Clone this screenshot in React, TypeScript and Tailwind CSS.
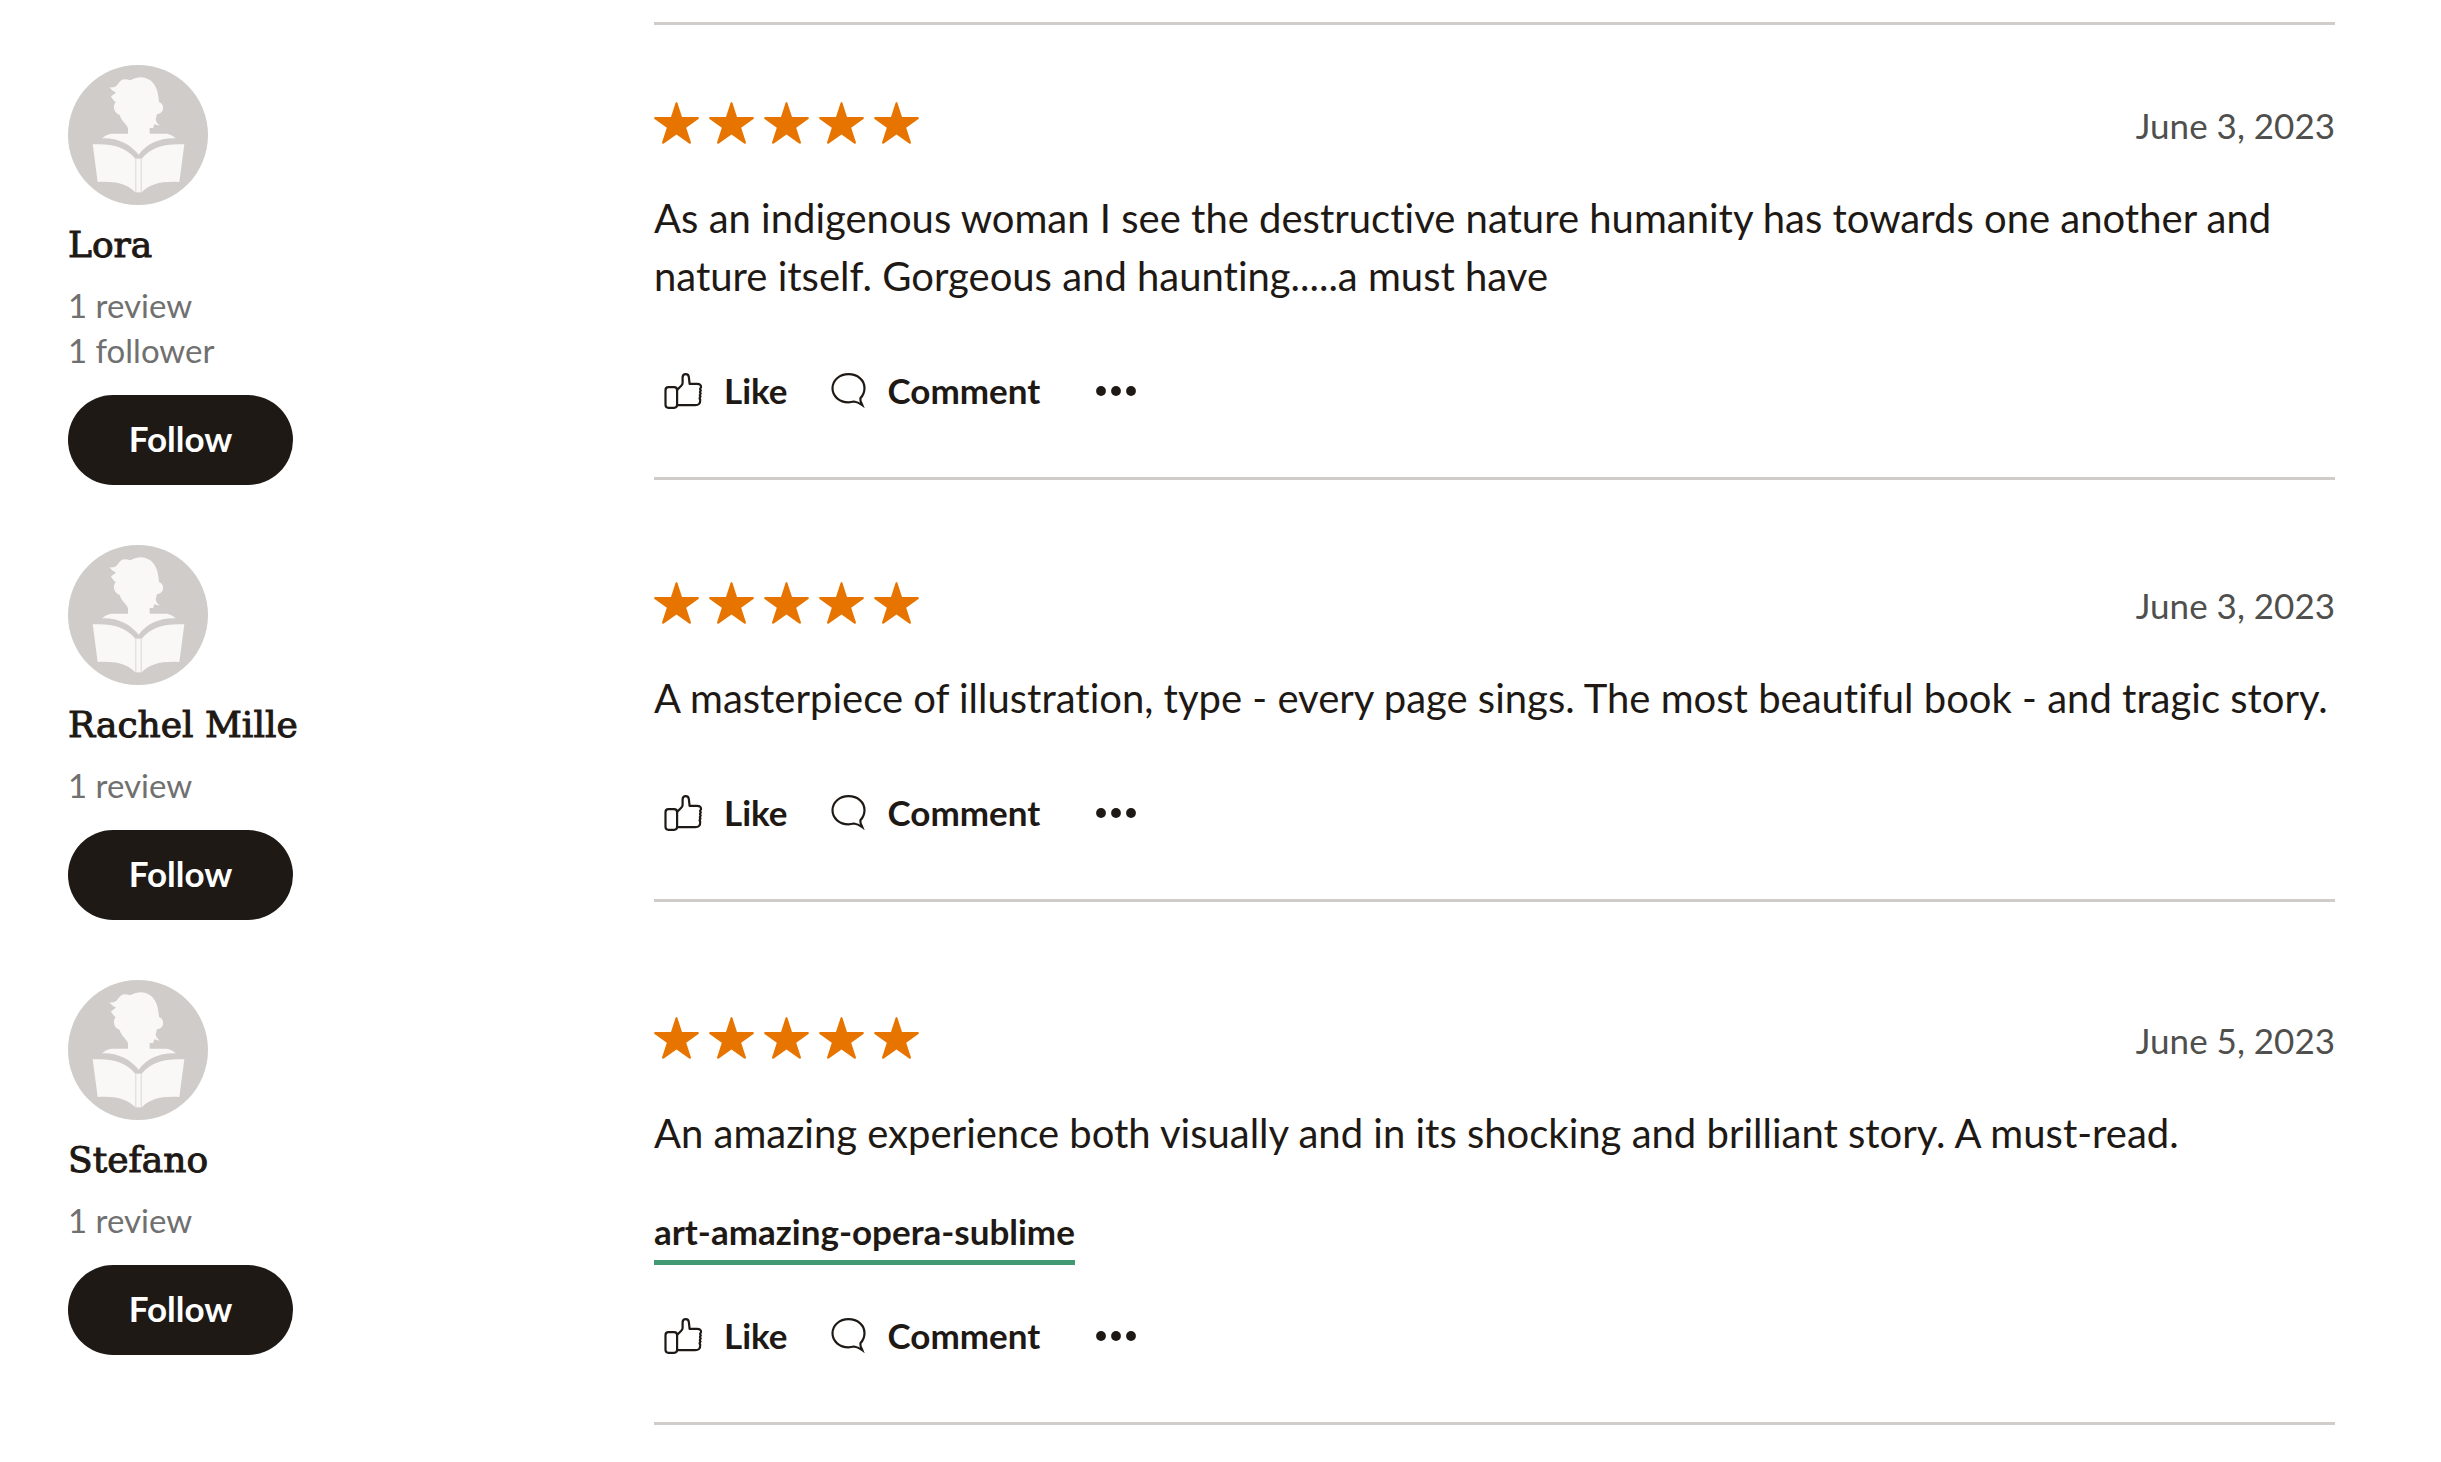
import { FC } from "react";

interface Review {
  id: number;
  name: string;
  stats: string[];
  date: string;
  text: string;
  tags: string[];
}

const reviews: Review[] = [
  {
    id: 1,
    name: "Lora",
    stats: ["1 review", "1 follower"],
    date: "June 3, 2023",
    text: "As an indigenous woman I see the destructive nature humanity has towards one another and nature itself. Gorgeous and haunting.....a must have",
    tags: [],
  },
  {
    id: 2,
    name: "Rachel Mille",
    stats: ["1 review"],
    date: "June 3, 2023",
    text: "A masterpiece of illustration, type - every page sings. The most beautiful book - and tragic story.",
    tags: [],
  },
  {
    id: 3,
    name: "Stefano",
    stats: ["1 review"],
    date: "June 5, 2023",
    text: "An amazing experience both visually and in its shocking and brilliant story. A must-read.",
    tags: ["art-amazing-opera-sublime"],
  },
];

const Avatar: FC = () => (
  <svg viewBox="0 0 420 420" className="size-[140px]" aria-hidden="true">
    <circle cx="210" cy="210" r="210" fill="#cfccc9" />
    <g fill="#f9f8f6">
      <path d="M180 206V191C178 178 161 171 155 150C136 144 134 121 143 112C136 106 130 98 129 94L144 83C136 80 128 72 125 67C136 68 144 66 149 58C158 44 168 39 186 46C208 34 228 34 241 43C264 54 271 81 273 111C290 116 291 145 267 148L263 163C264 171 268 176 275 182L259 178L255 190L245 188V206H296C308 208 318 214 323 220C276 218 236 236 212 269C186 236 146 218 102 220C108 214 118 208 130 206Z" />
      <path d="M74 238C130 235 172 244 202 281V382C178 356 140 348 89 351Z" />
      <path d="M349 238C293 235 251 244 221 281V382C245 356 283 348 334 351Z" />
      <path d="M202 281H221V382H202Z" />
    </g>
    <path d="M203.500 282V381M219.500 282V381" stroke="#dedcda" strokeWidth="3" fill="none" />
  </svg>
);

const Star: FC = () => (
  <svg viewBox="0 0 45 42" className="h-[42px] w-[45px]" fill="#e87400" aria-hidden="true">
    <path d="M21.600 0.800Q22.500 -0.800 23.400 0.800L28 15H44Q45.600 15.600 44.400 17L32.200 25.800L37 40.600Q36.900 42.300 35.200 41.600L22.500 32.400L9.800 41.600Q8.100 42.300 8 40.600L12.800 25.800L0.600 17Q-0.600 15.600 1 15H17Z" />
  </svg>
);

const LikeIcon: FC = () => (
  <svg
    viewBox="0 0 40 40"
    className="size-10"
    fill="none"
    stroke="#1e1915"
    strokeWidth="2.200"
    strokeLinejoin="round"
    aria-hidden="true"
  >
    <rect x="1.500" y="17.200" width="11.600" height="20.600" rx="3" />
    <path d="M13 20L17 16Q18.600 14.600 18.600 13V7.500C18.600 2.900 24.600 2.900 24.900 7.500L25.600 13.800H33C36 13.800 37.200 15 37 17.500Q35.300 18.900 36.800 20.400Q35.300 22 36.700 23.500Q35.200 25.100 36.500 26.600Q35 28.200 36.200 29.700C36.300 33.500 35 35.200 31 35.200H13" />
  </svg>
);

const CommentIcon: FC = () => (
  <svg
    viewBox="0 0 40 40"
    className="size-10"
    fill="none"
    stroke="#1e1915"
    strokeWidth="2.200"
    aria-hidden="true"
  >
    <path d="M32.400 28.300C35 25.500 36.500 22 36.500 18C36.500 10 29.500 4.200 20.500 4.200S4.500 10.300 4.500 18.300S11.500 32.300 20.500 32.300C22.500 32.300 24 32 26 31.500C28.500 31.800 31.500 33.200 34.300 35.200C33.500 33.200 32 31 32.400 28.300Z" />
  </svg>
);

const DotsIcon: FC = () => (
  <svg viewBox="0 0 40 40" className="size-10" fill="#1e1915" aria-hidden="true">
    <circle cx="5" cy="21" r="4.900" />
    <circle cx="20" cy="21" r="4.900" />
    <circle cx="35" cy="21" r="4.900" />
  </svg>
);

const ReviewCard: FC<{ review: Review }> = ({ review }) => {
  return (
    <article className="mb-[60px] grid grid-cols-[586px_1fr]">
      <div className="flex flex-col items-start">
        <Avatar />
        <a
          href="#"
          className="mt-3 font-['DejaVu_Serif',serif] text-[36px] leading-[56px] [-webkit-text-stroke:1px_#1e1915]"
        >
          {review.name}
        </a>
        <div className="mt-2.5 mb-[22px] text-[33px] leading-[45px] text-[#707070]">
          {review.stats.map((stat) => (
            <p key={stat}>{stat}</p>
          ))}
        </div>
        <button className="h-[90px] w-[225px] rounded-full bg-[#1e1915] pb-1 text-[35px] font-bold text-white">
          Follow
        </button>
      </div>

      <section className="self-start border-b-3 border-[#cfccc9] pt-8">
        <div className="flex h-[52px] items-center justify-between">
          <div className="flex gap-2.5" role="img" aria-label="Rating 5 out of 5">
            {[1, 2, 3, 4, 5].map((n) => (
              <Star key={n} />
            ))}
          </div>
          <time className="pt-1 text-[35px] text-[#4f4f4d]">{review.date}</time>
        </div>

        <p className="mt-10 text-[40px] leading-[58px]">{review.text}</p>

        {review.tags.length > 0 ? (
          <div className="mt-10 mb-[25px] flex">
            {review.tags.map((tag) => (
              <a
                key={tag}
                href="#"
                className="border-b-5 border-[#429a73] text-[35px] leading-[58px] font-bold"
              >
                {tag}
              </a>
            ))}
          </div>
        ) : (
          <div className="h-10" />
        )}

        <div className="mb-[42px] flex h-[90px] items-center gap-10 pl-2.5 text-[35px] font-bold">
          <button className="flex items-center gap-5">
            <LikeIcon />
            Like
          </button>
          <button className="flex items-center gap-5">
            <CommentIcon />
            Comment
          </button>
          <button className="pl-4" aria-label="More options">
            <DotsIcon />
          </button>
        </div>
      </section>
    </article>
  );
};

const App: FC = () => {
  return (
    <main className="min-h-screen bg-white pt-[22px] pr-[106px] pl-[68px] font-['Lato',sans-serif] text-[#1e1915] [font-variant-ligatures:none]">
      <hr className="mb-10 ml-[586px] border-t-3 border-[#cfccc9]" />
      {reviews.map((review) => (
        <ReviewCard key={review.id} review={review} />
      ))}
    </main>
  );
};

export default App;
